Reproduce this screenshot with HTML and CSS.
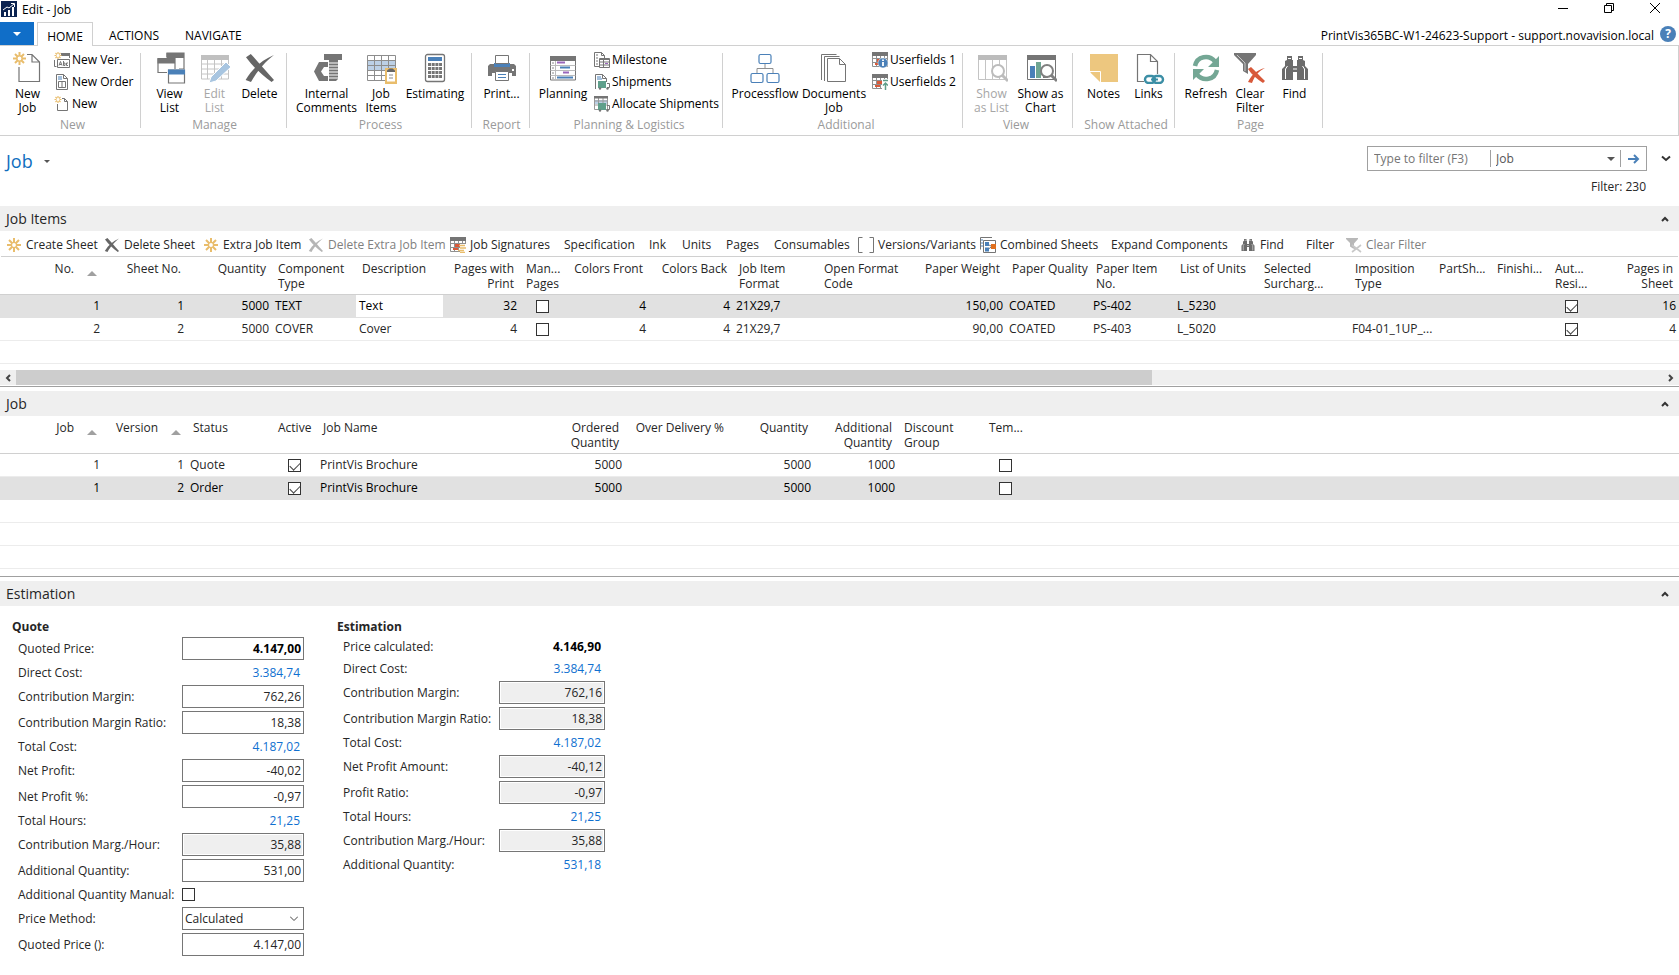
FILE: index.html
```html
<!DOCTYPE html>
<html lang="en">
<head>
  <meta charset="UTF-8" />
  <title>Edit - Job</title>
  <link rel="stylesheet" href="styles.css">
</head>
<body>

<!-- Icon set -->
<svg class="icon-defs" aria-hidden="true">
  <symbol id="i-star" viewBox="0 0 16 16">
    <path d="M8 1v4M8 11v4M1 8h4M11 8h4M3 3l3 3M10 10l3 3M13 3l-3 3M6 10l-3 3" stroke="#e9bd6c" stroke-width="2"/>
    <circle cx="8" cy="8" r="2.6" fill="#fff" stroke="#e9bd6c" stroke-width="1.4"/>
  </symbol>
  <symbol id="i-x" viewBox="0 0 16 16">
    <path d="M1 2.6L3.4 1C7 5 11 9.500 15 14l-1.200 1C9 11.500 4.500 7.500 1 2.600zM15 1.500C10 5.500 7 9 3.500 15L.8 14C4.500 8 9 4 15 1.500z" fill="currentColor"/>
  </symbol>
  <symbol id="i-newjob" viewBox="0 0 32 32">
    <path d="M15 2.500h5l7.500 7.500v19.500h-20.500V15M20 2.500v7.500h7.500" fill="none" stroke="#757575" stroke-width="1.200"/>
    <path d="M7.500 0v4.500M7.500 8.500V13M1 6.500h4.500M9.500 6.500H14M3 2l3 3M9 8l3 3M12 2L9 5M6 8l-3 3" stroke="#e9bd6c" stroke-width="2"/>
    <circle cx="7.500" cy="6.500" r="2.600" fill="#fff" stroke="#e9bd6c" stroke-width="1.400"/>
  </symbol>
  <symbol id="i-new" viewBox="0 0 16 16">
    <path d="M8 2.500h2.500l3 3v9h-10V8M10.500 2.500v3h3" fill="none" stroke="#757575"/>
    <path d="M4 0v2M4 5v2M.5 3.500h2M5.500 3.500h2M1.500 1l1.500 1.500M5 4.500L6.500 6M6.500 1L5 2.500M3 4.500L1.500 6" stroke="#e9bd6c" stroke-width="1.200"/>
  </symbol>
  <symbol id="i-newver" viewBox="0 0 16 16">
    <path d="M7 1h9v3H7z" fill="#757575"/>
    <path d="M.5 8v6.500h2M15.500 4v2" fill="none" stroke="#757575"/>
    <path d="M3.500 7.500h12v8h-12z" fill="#fff" stroke="#757575"/>
    <path d="M5 13.500l1.500-4 1.500 4M5.500 12.500h2M9.500 9v4.500h1.500v-2.500h-1.500M14 11h-1.500v2.500H14" fill="none" stroke="#757575"/>
    <path d="M4 0v2M4 5v2M.5 3.500h2M5.500 3.500h2M1.500 1l1.500 1.500M5 4.500L6.500 6M6.500 1L5 2.500M3 4.500L1.500 6" stroke="#e9bd6c" stroke-width="1.200"/>
  </symbol>
  <symbol id="i-order" viewBox="0 0 16 16">
    <path d="M2.500.5h7l4 4v11h-11zM9.500.5v4h4" fill="#fff" stroke="#757575"/>
    <path d="M4 3h4M4 5h4" stroke="#4a80b8"/>
    <path d="M4.500 7.500h7v6h-7zM8 7.500v6" fill="none" stroke="#757575"/>
  </symbol>
  <symbol id="i-viewlist" viewBox="0 0 32 32">
    <path d="M13 5V1h17v16h-5" fill="none" stroke="#757575" stroke-width="1.200"/><path d="M12.500 1H30v5H12.500z" fill="#757575"/>
    <path d="M4 6.500h17v14H4z" fill="#fff" stroke="#757575" stroke-width="1.200"/><path d="M3.500 6.500H21v5H3.500z" fill="#757575"/>
    <path d="M13 17h19v15H13z" fill="#fff"/><path d="M14.500 18h16v13h-16z" fill="#fff" stroke="#757575" stroke-width="1.200"/><path d="M14 17.500h17v5H14z" fill="#4a80b8"/>
  </symbol>
  <symbol id="i-editlist" viewBox="0 0 32 32">
    <path d="M2.500 4h27v23h-27zM2.500 12h27M2.500 17h27M2.500 22h27M8.500 4v23M15.500 4v23M22.500 4v23" fill="none" stroke="#c4c4c4"/><path d="M2 3h28v5H2z" fill="#c0c0c0"/>
    <path d="M10 31l2-6L27 10l5 5-15 14z" fill="#a8c5e0" stroke="#fff"/>
  </symbol>
  <symbol id="i-chartcal" viewBox="0 0 32 32">
    <path d="M2.500 3.500h28v25h-28z" fill="#fff"/><path d="M3 8.500h27v10H3z" fill="#bcd0e6"/>
    <path d="M2.500 3.500h28v25h-28zM2.500 8.500h28M2.500 13.500h28M2.500 18.500h28M2.500 23.500h28M9.500 3.500v25M16.500 3.500v25M23.500 3.500v25" fill="none" stroke="#8d8d8d"/>
    <path d="M20 16h12v16H20z" fill="#e9bd6c"/><path d="M22 18.500h8v11h-8z" fill="#fff"/><path d="M22 20v-1.500l2.500-2h3l2.500 2V20z" fill="#666"/><path d="M24 23h4M24 26h4" stroke="#888"/>
  </symbol>
  <symbol id="i-bolt" viewBox="0 0 32 32">
    <path d="M13 2h18v6h-4v19l-2 2h-7V8h-5z" fill="#757575"/><path d="M18 11h9M18 14h9M18 17h9M18 20h9M18 23h9M18 26h9" stroke="#fff" stroke-width="1.100"/>
    <path d="M8 10h9v5h-4l-3 4.500 3 4.500h4v5H8l-5-9.500z" fill="#757575"/>
  </symbol>
  <symbol id="i-calc" viewBox="0 0 32 32">
    <rect x="6.500" y="2.500" width="19" height="27" rx="2" fill="#fff" stroke="#757575" stroke-width="1.300"/><path d="M9 5h14v4H9z" fill="#4a80b8"/>
    <path d="M9 12.500h14M9 16.500h14M9 20.500h14M9 24.500h14" stroke="#757575" stroke-width="3" stroke-dasharray="3 .7"/>
  </symbol>
  <symbol id="i-print" viewBox="0 0 32 32">
    <path d="M4 12h24l2 2v10h-4v-3H6v3H2V14z" fill="#757575"/><path d="M8 11h16v4H8z" fill="#4a80b8"/>
    <path d="M9.500 3.500h13v8h-13zM9.500 19.500h13v9h-13z" fill="#fff" stroke="#757575"/><path d="M12 22.500h8M12 25.500h8" stroke="#4a80b8"/><path d="M26 18h2" stroke="#fff" stroke-width="2"/>
  </symbol>
  <symbol id="i-plan" viewBox="0 0 32 32">
    <path d="M3.500 5h25v23h-25z" fill="#fff" stroke="#757575"/><path d="M3 4h26v5H3z" fill="#757575"/>
    <path d="M3.500 13.500h25M3.500 18.500h25M3.500 23.500h25M8.500 9v19" stroke="#bbb"/><path d="M10 10.500h8M16 20.500h6" stroke="#9966bb" stroke-width="2"/><path d="M13 15.500h10M10 25.500h16" stroke="#4a80b8" stroke-width="2"/><path d="M5 11h2M5 16h2M5 21h2M5 26h2" stroke="#888"/>
  </symbol>
  <symbol id="i-milestone" viewBox="0 0 16 16">
    <path d="M.5.5h7l3 3v11H.5zM7.500.5v3h3M2 3h2M2 6h2M2 9h2M2 12h2" fill="#fff" stroke="#757575"/>
    <path d="M5.500 6.500h10v9h-10zM5.500 7.500h10M5.500 10h10M5.500 13h10M9.500 7v8" fill="#fff" stroke="#757575"/><path d="M11 11.500h3" stroke="#9966bb"/>
  </symbol>
  <symbol id="i-ship" viewBox="0 0 16 16">
    <path d="M1.500 15V.5h7l4 4V8M8.500.5v4h4" fill="none" stroke="#757575"/><path d="M3 3h4M3 5h5" stroke="#4a80b8"/>
    <path d="M4 7h8v7H4z" fill="#5f9f8b"/><path d="M13 9.500h2.500v4H13" fill="none" stroke="#757575"/><circle cx="6" cy="14.500" r="1.200" fill="#757575"/><circle cx="13.500" cy="14.500" r="1.200" fill="#757575"/>
  </symbol>
  <symbol id="i-alloc" viewBox="0 0 16 16">
    <path d="M1 4h12v4H1z" fill="#bcd0e6"/><path d="M.5 1.500h13v12H.5zM.5 5h13M.5 9h13M4.500 1v12M9 1v12" fill="none" stroke="#999"/><path d="M0 0h14v2.500H0z" fill="#757575"/>
    <path d="M4 7h8v7H4z" fill="#5f9f8b"/><path d="M13 9.500h2.500v4H13" fill="none" stroke="#757575"/><circle cx="6" cy="14.500" r="1.200" fill="#757575"/><circle cx="13.500" cy="14.500" r="1.200" fill="#757575"/>
  </symbol>
  <symbol id="i-flow" viewBox="0 0 32 32">
    <path d="M16 12v5M8 21v-4.500h16V21" fill="none" stroke="#909090"/><g fill="#fff" stroke="#4a80b8" stroke-width="1.200"><rect x="10" y="2.500" width="12" height="9" rx="1.500"/><rect x="2" y="21.500" width="12" height="9" rx="1.500"/><rect x="18" y="21.500" width="12" height="9" rx="1.500"/></g>
  </symbol>
  <symbol id="i-docs" viewBox="0 0 32 32">
    <g fill="#fff" stroke="#757575"><path d="M3.500 28V2.500h15M6.500 29V4.500h15" fill="none"/><path d="M9.500 6.500h12l6 6v17h-18zM21.500 6.500v6h6"/></g>
  </symbol>
  <symbol id="i-grid" viewBox="0 0 16 16">
    <path d="M.5 1.500h15v13H.5zM.5 6.500h15M.5 10.500h15M4.500 3v12M8.500 3v12M12.500 3v12" fill="none" stroke="#909090"/><path d="M0 0h16v4H0z" fill="#757575"/><path d="M5 7h6v3H5zM3 11h5v2H3z" fill="#d8593a"/>
  </symbol>
  <symbol id="i-user1" viewBox="0 0 16 16">
    <use href="#i-grid"/><circle cx="11" cy="11" r="5" fill="#4a80b8" stroke="#fff" stroke-width=".5"/><path d="M11 7.500v1.500M11 10v4" stroke="#fff" stroke-width="1.800"/>
  </symbol>
  <symbol id="i-user2" viewBox="0 0 16 16">
    <use href="#i-grid"/><path d="M10 5h6v11h-6z" fill="#fff"/><path d="M11 6.500h5M13.500 16V9M11 11.500L13.500 9l2.500 2.500" fill="none" stroke="#5f9f8b" stroke-width="1.500"/>
  </symbol>
  <symbol id="i-sign" viewBox="0 0 16 16">
    <use href="#i-grid"/><path d="M10 7h6v9h-6z" fill="#fff"/><path d="M9 8.500h6M10 11h6M8 13.500h6M10 15.500h5" stroke="#e9bd6c" stroke-width="1.600"/>
  </symbol>
  <symbol id="i-showlist" viewBox="0 0 32 32">
    <path d="M2.500 5h28v22.500h-28zM9.500 8v19M16.500 8v19M23.500 8v19" fill="none" stroke="#c4c4c4"/><path d="M2 3h29v5H2z" fill="#bcbcbc"/>
    <circle cx="22" cy="19" r="6" fill="#fff" stroke="#bcbcbc" stroke-width="2"/><path d="M26 23l6 6" stroke="#bcbcbc" stroke-width="3"/>
  </symbol>
  <symbol id="i-showchart" viewBox="0 0 32 32">
    <path d="M2.500 5h28v22.500h-28z" fill="#fff" stroke="#757575"/><path d="M2 3h29v5H2z" fill="#757575"/><path d="M5 14h5v12H5z" fill="#4a80b8"/><path d="M11 10h5v16h-5z" fill="#6fa592"/><path d="M18 14h5v12h-5z" fill="#757575"/>
    <circle cx="22" cy="19" r="6" fill="#fff" stroke="#808080" stroke-width="2"/><path d="M26 23l6 6" stroke="#808080" stroke-width="3"/>
  </symbol>
  <symbol id="i-note" viewBox="0 0 32 32">
    <path d="M2 2h28v28H13L2 20z" fill="#edc77f"/><path d="M2 19.500h10.500V30" fill="none" stroke="#fff"/><path d="M3 21h9v9z" fill="#edc77f"/>
  </symbol>
  <symbol id="i-links" viewBox="0 0 32 32">
    <path d="M11 29.500H4.500v-27h13l7 7V22M17.500 2.500v7h7" fill="none" stroke="#757575" stroke-width="1.200"/>
    <g fill="none" stroke="#3b8ea5" stroke-width="2.400"><rect x="12" y="24" width="10" height="7" rx="3.500"/><rect x="20" y="24" width="10" height="7" rx="3.500"/></g><path d="M18 27.500h7" stroke="#3b8ea5" stroke-width="2"/>
  </symbol>
  <symbol id="i-refresh" viewBox="0 0 32 32">
    <g fill="none" stroke="#74a795" stroke-width="4.500"><path d="M5 14C7 4 19 2 25 9.500"/><path d="M27 18C25 28 13 30 7 22.500"/></g><path d="M29 4v11H18zM3 28V17h11z" fill="#74a795"/>
  </symbol>
  <symbol id="i-clear" viewBox="0 0 32 32">
    <path d="M0 1h22v2l-8 9v10l-5-3v-7L0 3z" fill="#757575"/><path d="M3 3l8 8v8" fill="none" stroke="#c8c8c8"/>
    <path d="M14 17l3-2c5 5 9 9 14 14l-2 2c-6-4-11-8-15-14zM31 16c-6 3-10 7-13 15l-4-1c4-8 9-12 17-14z" fill="#d8593a"/>
  </symbol>
  <symbol id="i-find" viewBox="0 0 32 32">
    <path d="M8 4h5v4h1v6h4V8h1V4h5v4l2 1v5l3 3v11H18v-8h-4v8H3V17l3-3V9l2-1z" fill="#6b6b6b"/><path d="M6.500 27V17l2-3M25.500 27V17l-2-3M9 6.500h3M20 6.500h3M14 17h4" stroke="#fff" fill="none"/>
  </symbol>
  <symbol id="i-brackets" viewBox="0 0 16 16"><path d="M4.500.5h-4v15h4M11.500.5h4v15h-4" fill="none" stroke="#757575"/></symbol>
  <symbol id="i-combined" viewBox="0 0 16 16">
    <path d="M12 .5H.5v12" fill="none" stroke="#757575"/><path d="M2 2v9" stroke="#4a80b8" stroke-dasharray="2 1"/><path d="M3.500 3.500h12v12h-12z" fill="#fff" stroke="#757575"/>
    <path d="M7 7l5 2.500L7 13" stroke="#757575" fill="none"/><path d="M5 5h4v4H5zM5 10.500h4v4H5z" fill="#4a80b8"/><path d="M11 7h5v5h-5z" fill="#e07020"/>
  </symbol>
  <symbol id="i-clearsmall" viewBox="0 0 16 16">
    <path d="M0 1h12v1L8 6.500v3l3 3-4-1-3-2V6L0 2z" fill="#b8b8b8"/><path d="M6 8l9 7M15 8l-9 7" stroke="#c8c8c8" stroke-width="1.600"/>
  </symbol>
  <symbol id="i-up" viewBox="0 0 8 6"><path d="M1 5l3-3 3 3" fill="none" stroke="#333" stroke-width="2"/></symbol>
  <symbol id="i-down" viewBox="0 0 10 7"><path d="M1 1.500l4 3.500 4-3.500" fill="none" stroke="#333" stroke-width="2"/></symbol>
</svg>

<header class="titlebar">
  <svg class="app-icon" viewBox="0 0 16 16"><path d="M0 0h16v16H0z" fill="#0b2350"/><path d="M3 15v-4h2v4zM7 15V9h2v6zM11 15V6h2v9z" fill="#fff"/><path d="M2 9l4-3 2 1 5-4M10 2.500h3.500V6" fill="none" stroke="#fff"/></svg>
  <span class="title">Edit - Job</span>
  <button class="win-btn" aria-label="Minimize"><svg viewBox="0 0 10 10"><path d="M0 5.500h10" stroke="#000"/></svg></button>
  <button class="win-btn" aria-label="Restore"><svg viewBox="0 0 10 10"><path d="M.5 2.500h7v7h-7zM2.500 2.500v-2h7v7h-2" fill="none" stroke="#000"/></svg></button>
  <button class="win-btn" aria-label="Close"><svg viewBox="0 0 10 10"><path d="M0 0l10 10M10 0L0 10" stroke="#000"/></svg></button>
</header>

<nav class="tabs">
  <button class="file-btn" aria-label="File menu"><svg viewBox="0 0 8 4"><path d="M0 0h8L4 4z" fill="#fff"/></svg></button>
  <button class="tab-btn active">HOME</button>
  <button class="tab-btn">ACTIONS</button>
  <button class="tab-btn">NAVIGATE</button>
  <span class="server">PrintVis365BC-W1-24623-Support - support.novavision.local</span>
  <button class="help-btn" aria-label="Help">?</button>
</nav>

<div class="ribbon">
  <section class="group group-new">
    <button class="big"><svg><use href="#i-newjob"/></svg>New<br>Job</button>
    <div class="smalls">
      <button class="small"><svg><use href="#i-newver"/></svg>New Ver.</button>
      <button class="small"><svg><use href="#i-order"/></svg>New Order</button>
      <button class="small"><svg><use href="#i-new"/></svg>New</button>
    </div>
    <h2>New</h2>
  </section>
  <span class="sep"></span>
  <section class="group group-manage">
    <button class="big"><svg><use href="#i-viewlist"/></svg>View<br>List</button>
    <button class="big" disabled><svg><use href="#i-editlist"/></svg>Edit<br>List</button>
    <button class="big"><svg class="gray"><use href="#i-x"/></svg>Delete</button>
    <h2>Manage</h2>
  </section>
  <span class="sep"></span>
  <section class="group group-process">
    <button class="big"><svg><use href="#i-bolt"/></svg>Internal<br>Comments</button>
    <button class="big"><svg><use href="#i-chartcal"/></svg>Job<br>Items</button>
    <button class="big"><svg><use href="#i-calc"/></svg>Estimating</button>
    <h2>Process</h2>
  </section>
  <span class="sep"></span>
  <section class="group group-report">
    <button class="big"><svg><use href="#i-print"/></svg>Print...</button>
    <h2>Report</h2>
  </section>
  <span class="sep"></span>
  <section class="group group-planning">
    <button class="big"><svg><use href="#i-plan"/></svg>Planning</button>
    <div class="smalls">
      <button class="small"><svg><use href="#i-milestone"/></svg>Milestone</button>
      <button class="small"><svg><use href="#i-ship"/></svg>Shipments</button>
      <button class="small"><svg><use href="#i-alloc"/></svg>Allocate Shipments</button>
    </div>
    <h2>Planning &amp; Logistics</h2>
  </section>
  <span class="sep"></span>
  <section class="group group-additional">
    <button class="big"><svg><use href="#i-flow"/></svg>Processflow</button>
    <button class="big"><svg><use href="#i-docs"/></svg>Documents<br>Job</button>
    <div class="smalls">
      <button class="small"><svg><use href="#i-user1"/></svg>Userfields 1</button>
      <button class="small"><svg><use href="#i-user2"/></svg>Userfields 2</button>
    </div>
    <h2>Additional</h2>
  </section>
  <span class="sep"></span>
  <section class="group group-view">
    <button class="big" disabled><svg><use href="#i-showlist"/></svg>Show<br>as List</button>
    <button class="big"><svg><use href="#i-showchart"/></svg>Show as<br>Chart</button>
    <h2>View</h2>
  </section>
  <span class="sep"></span>
  <section class="group group-attached">
    <button class="big"><svg><use href="#i-note"/></svg>Notes</button>
    <button class="big"><svg><use href="#i-links"/></svg>Links</button>
    <h2>Show Attached</h2>
  </section>
  <span class="sep"></span>
  <section class="group group-page">
    <button class="big"><svg><use href="#i-refresh"/></svg>Refresh</button>
    <button class="big"><svg><use href="#i-clear"/></svg>Clear<br>Filter</button>
    <button class="big"><svg><use href="#i-find"/></svg>Find</button>
    <h2>Page</h2>
  </section>
  <span class="sep"></span>
</div>

<div class="page-head">
  <button class="page-title">Job <svg viewBox="0 0 6 3"><path d="M0 0h6L3 3z" fill="#555"/></svg></button>
  <div class="filter">
    <div class="filter-row">
      <div class="filter-box">
        <input type="text" class="filter-input" placeholder="Type to filter (F3)" aria-label="Type to filter">
        <span class="select-wrap filter-field">
          <select aria-label="Filter field"><option>Job</option></select>
          <svg viewBox="0 0 8 4"><path d="M0 0h8L4 4z" fill="#555"/></svg>
        </span>
        <button class="go-btn" aria-label="Apply filter"><svg viewBox="0 0 12 10"><path d="M0 5h10M6 1l4 4-4 4" fill="none" stroke="#4a80b8" stroke-width="2"/></svg></button>
      </div>
      <button class="expand-btn" aria-label="Expand filter"><svg><use href="#i-down"/></svg></button>
    </div>
    <div class="filter-info">Filter: 230</div>
  </div>
</div>

<!-- Job Items -->
<section class="part">
  <div class="part-head"><h1>Job Items</h1><button aria-label="Collapse"><svg><use href="#i-up"/></svg></button></div>
  <div class="toolbar">
    <button><svg><use href="#i-star"/></svg>Create Sheet</button>
    <button><svg class="gray"><use href="#i-x"/></svg>Delete Sheet</button>
    <button><svg><use href="#i-star"/></svg>Extra Job Item</button>
    <button disabled><svg class="light"><use href="#i-x"/></svg>Delete Extra Job Item</button>
    <button><svg><use href="#i-sign"/></svg>Job Signatures</button>
    <button>Specification</button>
    <button>Ink</button>
    <button>Units</button>
    <button>Pages</button>
    <button>Consumables</button>
    <button><svg><use href="#i-brackets"/></svg>Versions/Variants</button>
    <button><svg><use href="#i-combined"/></svg>Combined Sheets</button>
    <button>Expand Components</button>
    <button><svg><use href="#i-find"/></svg>Find</button>
    <button>Filter</button>
    <button disabled><svg><use href="#i-clearsmall"/></svg>Clear Filter</button>
  </div>
  <table class="grid items-grid">
    <colgroup>
      <col class="c103"><col class="c84"><col class="c85"><col class="c84"><col class="c87"><col class="c77"><col class="c45"><col class="c84"><col class="c84"><col class="c85"><col class="c84"><col class="c104"><col class="c84"><col class="c84"><col class="c84"><col class="c91"><col class="c84"><col class="c58"><col class="c58"><col class="c45"><col>
    </colgroup>
    <thead>
      <tr>
        <th class="num"><span class="sorted">No.</span></th><th class="num">Sheet No.</th><th class="num">Quantity</th><th>Component<br>Type</th><th>Description</th><th class="num">Pages with<br>Print</th><th>Man...<br>Pages</th><th class="num">Colors Front</th><th class="num">Colors Back</th><th>Job Item<br>Format</th><th>Open Format<br>Code</th><th class="num">Paper Weight</th><th>Paper Quality</th><th>Paper Item<br>No.</th><th>List of Units</th><th>Selected<br>Surcharg...</th><th>Imposition<br>Type</th><th>PartSh...</th><th>Finishi...</th><th>Aut...<br>Resi...</th><th class="num">Pages in<br>Sheet</th>
      </tr>
    </thead>
    <tbody>
      <tr class="selected">
        <td class="num">1</td><td class="num">1</td><td class="num">5000</td><td>TEXT</td><td class="editing">Text</td><td class="num">32</td><td class="check"><input type="checkbox" aria-label="Manual pages"></td><td class="num">4</td><td class="num">4</td><td>21X29,7</td><td></td><td class="num">150,00</td><td>COATED</td><td>PS-402</td><td>L_5230</td><td></td><td></td><td></td><td></td><td class="check"><input type="checkbox" aria-label="Auto resize" checked></td><td class="num">16</td>
      </tr>
      <tr>
        <td class="num">2</td><td class="num">2</td><td class="num">5000</td><td>COVER</td><td>Cover</td><td class="num">4</td><td class="check"><input type="checkbox" aria-label="Manual pages"></td><td class="num">4</td><td class="num">4</td><td>21X29,7</td><td></td><td class="num">90,00</td><td>COATED</td><td>PS-403</td><td>L_5020</td><td></td><td>F04-01_1UP_...</td><td></td><td></td><td class="check"><input type="checkbox" aria-label="Auto resize" checked></td><td class="num">4</td>
      </tr>
      <tr><td colspan="21"></td></tr>
    </tbody>
  </table>
  <div class="scrollbar">
    <button aria-label="Scroll left"><svg viewBox="0 0 6 8"><path d="M5 1L2 4l3 3" fill="none" stroke="#444" stroke-width="2"/></svg></button>
    <div class="track"><div class="thumb"></div></div>
    <button aria-label="Scroll right"><svg viewBox="0 0 6 8"><path d="M1 1l3 3-3 3" fill="none" stroke="#444" stroke-width="2"/></svg></button>
  </div>
</section>

<!-- Job versions -->
<section class="part">
  <div class="part-head"><h1>Job</h1><button aria-label="Collapse"><svg><use href="#i-up"/></svg></button></div>
  <table class="grid job-grid">
    <colgroup>
      <col class="c103"><col class="c84"><col class="c85"><col class="c45"><col class="c203"><col class="c105"><col class="c105"><col class="c84"><col class="c84"><col class="c85"><col class="c45"><col>
    </colgroup>
    <thead>
      <tr>
        <th class="num"><span class="sorted">Job</span></th><th class="num"><span class="sorted">Version</span></th><th>Status</th><th>Active</th><th>Job Name</th><th class="num">Ordered<br>Quantity</th><th class="num">Over Delivery %</th><th class="num">Quantity</th><th class="num">Additional<br>Quantity</th><th>Discount<br>Group</th><th>Tem...</th><th></th>
      </tr>
    </thead>
    <tbody>
      <tr>
        <td class="num">1</td><td class="num">1</td><td>Quote</td><td class="check"><input type="checkbox" aria-label="Active" checked></td><td>PrintVis Brochure</td><td class="num">5000</td><td></td><td class="num">5000</td><td class="num">1000</td><td></td><td class="check"><input type="checkbox" aria-label="Template"></td><td></td>
      </tr>
      <tr class="selected">
        <td class="num">1</td><td class="num">2</td><td>Order</td><td class="check"><input type="checkbox" aria-label="Active" checked></td><td>PrintVis Brochure</td><td class="num">5000</td><td></td><td class="num">5000</td><td class="num">1000</td><td></td><td class="check"><input type="checkbox" aria-label="Template"></td><td></td>
      </tr>
      <tr><td colspan="12"></td></tr>
      <tr><td colspan="12"></td></tr>
      <tr><td colspan="12"></td></tr>
    </tbody>
  </table>
</section>

<!-- Estimation -->
<section class="part estimation">
  <div class="part-head"><h1>Estimation</h1><button aria-label="Collapse"><svg><use href="#i-up"/></svg></button></div>
  <div class="columns">
    <form class="fields quote">
      <h2>Quote</h2>
      <div class="field"><label for="q-price">Quoted Price:</label><input type="text" id="q-price" class="strong" value="4.147,00"></div>
      <div class="field"><span>Direct Cost:</span><a href="#">3.384,74</a></div>
      <div class="field"><label for="q-margin">Contribution Margin:</label><input type="text" id="q-margin" value="762,26"></div>
      <div class="field"><label for="q-ratio">Contribution Margin Ratio:</label><input type="text" id="q-ratio" value="18,38"></div>
      <div class="field"><span>Total Cost:</span><a href="#">4.187,02</a></div>
      <div class="field"><label for="q-profit">Net Profit:</label><input type="text" id="q-profit" value="-40,02"></div>
      <div class="field"><label for="q-pct">Net Profit %:</label><input type="text" id="q-pct" value="-0,97"></div>
      <div class="field"><span>Total Hours:</span><a href="#">21,25</a></div>
      <div class="field"><label for="q-hour">Contribution Marg./Hour:</label><input type="text" id="q-hour" value="35,88" readonly></div>
      <div class="field"><label for="q-addqty">Additional Quantity:</label><input type="text" id="q-addqty" value="531,00"></div>
      <div class="field"><label for="q-manual">Additional Quantity Manual:</label><input type="checkbox" id="q-manual"></div>
      <div class="field">
        <label for="q-method">Price Method:</label>
        <span class="select-wrap boxed">
          <select id="q-method"><option>Calculated</option></select>
          <svg viewBox="0 0 8 5"><path d="M0 .5l4 4 4-4" fill="none" stroke="#444"/></svg>
        </span>
      </div>
      <div class="field"><label for="q-price2">Quoted Price ():</label><input type="text" id="q-price2" value="4.147,00"></div>
    </form>
    <form class="fields calc">
      <h2>Estimation</h2>
      <div class="field"><span>Price calculated:</span><output class="strong">4.146,90</output></div>
      <div class="field"><span>Direct Cost:</span><a href="#">3.384,74</a></div>
      <div class="field"><label for="e-margin">Contribution Margin:</label><input type="text" id="e-margin" value="762,16" readonly></div>
      <div class="field"><label for="e-ratio">Contribution Margin Ratio:</label><input type="text" id="e-ratio" value="18,38" readonly></div>
      <div class="field"><span>Total Cost:</span><a href="#">4.187,02</a></div>
      <div class="field"><label for="e-profit">Net Profit Amount:</label><input type="text" id="e-profit" value="-40,12" readonly></div>
      <div class="field"><label for="e-pct">Profit Ratio:</label><input type="text" id="e-pct" value="-0,97" readonly></div>
      <div class="field"><span>Total Hours:</span><a href="#">21,25</a></div>
      <div class="field"><label for="e-hour">Contribution Marg./Hour:</label><input type="text" id="e-hour" value="35,88" readonly></div>
      <div class="field"><span>Additional Quantity:</span><a href="#">531,18</a></div>
    </form>
  </div>
</section>

</body>
</html>
```
FILE: styles.css
```css
:root {
  --text: #262626;
  --muted: #9a9a9a;
  --line: #d0d0d0;
  --blue: #106ebe;
  --band: #efefef;
}

* {
  box-sizing: border-box;
}

body {
  margin: 0;
  background: #fff;
  color: var(--text);
  font-family: "Segoe UI", "Open Sans", sans-serif;
  font-size: 12px;
  line-height: 15px;
}

button,
input,
select {
  font: inherit;
  color: inherit;
  margin: 0;
  padding: 0;
  border: none;
  background: none;
  border-radius: 0;
}

button {
  white-space: nowrap;
}

h1,
h2 {
  margin: 0;
  font-size: 12px;
  font-weight: normal;
}

svg {
  display: block;
  flex: none;
}

.icon-defs {
  display: none;
}

.gray {
  color: #666;
}

.light {
  color: #b5b5b5;
}

/* Title bar */
.titlebar {
  display: flex;
  align-items: flex-start;
  height: 22px;
  padding: 1px 1px 0 1px;
}

.app-icon {
  width: 16px;
  height: 16px;
}

.title {
  flex: 1;
  padding: 1px 5px;
  color: #000;
}

.win-btn {
  display: grid;
  place-items: center;
  width: 46px;
  height: 14px;
}

.win-btn svg {
  width: 10px;
  height: 10px;
}

/* Tabs */
.tabs {
  display: flex;
  height: 23px;
  color: #000;
}

.file-btn {
  display: grid;
  place-items: center;
  width: 34px;
  margin-right: 3px;
  background: #106ec8;
}

.file-btn svg {
  width: 8px;
  height: 4px;
}

.tab-btn {
  padding: 4px 15px 0 11px;
}

.tab-btn.active {
  z-index: 1;
  width: 56px;
  height: 24px;
  margin-right: 5px;
  padding: 3px 0 0;
  border: 1px solid var(--line);
  border-bottom: none;
  background: #fff;
}

.server {
  margin-left: auto;
  padding: 6px 6px 0 0;
}

.help-btn {
  width: 16px;
  height: 16px;
  margin: 4px 3px 0 0;
  border-radius: 50%;
  background: #4a80b8;
  color: #fff;
  font-weight: bold;
  line-height: 16px;
}

/* Ribbon */
.ribbon {
  display: flex;
  height: 91px;
  border: 1px solid var(--line);
  border-left: none;
}

.sep {
  width: 1px;
  margin: 7px 0;
  background: var(--line);
}

.group {
  display: grid;
  grid-template-rows: 71px 16px;
  flex: none;
}

.group h2 {
  grid-column: 1 / -1;
  text-align: center;
  line-height: 16px;
  color: var(--muted);
}

.group-new { width: 140px; padding-left: 5px; grid-template-columns: 45px 1fr; }
.group-manage { width: 145px; padding-left: 6px; grid-template-columns: 45px 45px 45px; }
.group-process { width: 184px; padding-left: 6px; grid-template-columns: 67px 42px 66px; }
.group-report { width: 57px; padding-left: 7px; grid-template-columns: 45px; }
.group-planning { width: 192px; padding-left: 6px; grid-template-columns: 54px 1fr; }
.group-additional { width: 239px; padding-left: 7px; grid-template-columns: 70px 68px 1fr; }
.group-view { width: 109px; padding-left: 4px; grid-template-columns: 49px 49px; }
.group-attached { width: 101px; padding-left: 8px; grid-template-columns: 45px 45px; }
.group-page { width: 147px; padding-left: 8px; grid-template-columns: 46px 42px 47px; }

.group-attached h2 {
  white-space: nowrap;
}

.big {
  display: block;
  align-self: start;
  padding-top: 6px;
  line-height: 14px;
  color: #000;
}

.big svg {
  width: 32px;
  height: 32px;
  margin: 0 auto 3px;
}

.big:disabled {
  color: #a6a6a6;
}

.smalls {
  padding: 3px 0 0 4px;
}

.small {
  display: flex;
  align-items: center;
  gap: 2px;
  height: 22px;
  padding-bottom: 1px;
  color: #000;
}

.small svg {
  width: 16px;
  height: 16px;
}

/* Page heading and filter */
.page-head {
  display: flex;
  justify-content: space-between;
  align-items: flex-start;
  height: 70px;
  padding: 10px 8px 0 6px;
}

.page-title {
  display: flex;
  align-items: center;
  gap: 11px;
  font-size: 18px;
  line-height: 30px;
  color: var(--blue);
}

.page-title svg {
  width: 6px;
  height: 3px;
}

.filter-row {
  display: flex;
  align-items: center;
  gap: 14px;
}

.filter-box {
  display: flex;
  width: 280px;
  height: 25px;
  padding: 3px 0;
  border: 1px solid #a0a0a0;
  color: #555;
}

.filter-input {
  width: 123px;
  padding-left: 6px;
  border-right: 1px solid #a0a0a0;
}

.filter-input::placeholder {
  color: #757575;
}

.select-wrap {
  display: grid;
  align-items: center;
}

.select-wrap select,
.select-wrap svg {
  grid-area: 1 / 1;
}

.select-wrap select {
  appearance: none;
  width: 100%;
}

.select-wrap svg {
  justify-self: end;
  width: 8px;
  margin-right: 5px;
  pointer-events: none;
}

.filter-field {
  flex: 1;
  padding-left: 5px;
  border-right: 1px solid #a0a0a0;
}

.go-btn {
  display: grid;
  place-items: center;
  width: 25px;
}

.go-btn svg {
  width: 12px;
  height: 10px;
}

.expand-btn svg {
  width: 10px;
  height: 7px;
}

.filter-info {
  padding: 8px 25px 0 0;
  text-align: right;
}

/* Parts */
.part {
  border-bottom: 1px solid #a0a0a0;
  margin-bottom: 4px;
}

.part-head {
  display: flex;
  justify-content: space-between;
  align-items: center;
  height: 25px;
  padding: 0 10px 0 6px;
  background: var(--band);
}

.part-head h1 {
  font-size: 14px;
}

.part-head svg {
  width: 8px;
  height: 6px;
}

.toolbar {
  display: grid;
  grid-template-columns: 98px 99px 105px 142px 114px 85px 33px 44px 48px 84px 122px 131px 129px 66px 40px 1fr;
  height: 26px;
  margin: 0 1px;
  padding-left: 5px;
  border-bottom: 1px solid var(--line);
}

.toolbar button {
  display: flex;
  align-items: center;
  gap: 4px;
  padding-top: 2px;
}

.toolbar button:disabled {
  color: #808080;
}

.toolbar svg {
  width: 16px;
  height: 16px;
}

.grid {
  width: 100%;
  table-layout: fixed;
  border-spacing: 0;
}

.grid th {
  height: 38px;
  padding: 4px 6px 0;
  border-bottom: 1px solid var(--line);
  font-weight: normal;
  text-align: left;
  vertical-align: top;
  white-space: nowrap;
}

.grid td {
  height: 23px;
  padding: 0 3px 1px;
  border-bottom: 1px solid #ececec;
  line-height: 14px;
  white-space: nowrap;
}

.grid .num {
  text-align: right;
}

.grid .check {
  text-align: center;
}

.grid .selected td {
  background: #e1e1e1;
  border-color: #e1e1e1;
  color: #000;
}

.grid .selected .editing {
  background: #fff;
}

.sorted {
  display: flex;
  justify-content: flex-end;
  align-items: flex-end;
  gap: 13px;
}

.sorted::after {
  content: "";
  border: 5px solid transparent;
  border-top: none;
  border-bottom-color: #a0a0a0;
}

.c45 { width: 45px; }
.c58 { width: 58px; }
.c77 { width: 77px; }
.c84 { width: 84px; }
.c85 { width: 85px; }
.c87 { width: 87px; }
.c91 { width: 91px; }
.c103 { width: 103px; }
.c104 { width: 104px; }
.c105 { width: 105px; }
.c203 { width: 203px; }

.job-grid {
  padding-bottom: 7px;
}

input[type="checkbox"] {
  appearance: none;
  display: inline-block;
  width: 13px;
  height: 13px;
  border: 1px solid #333;
  background: #fff;
  vertical-align: middle;
}

input[type="checkbox"]:checked::after {
  content: "";
  display: block;
  width: 9px;
  height: 5px;
  margin: 2px 1px;
  border: solid #444;
  border-width: 0 0 1px 1px;
  transform: rotate(-45deg);
}

.scrollbar {
  display: flex;
  height: 16px;
  margin-top: 5px;
  border-bottom: 1px solid #fff;
  background: var(--band);
}

.scrollbar button {
  display: grid;
  place-items: center;
  width: 16px;
}

.scrollbar svg {
  width: 6px;
  height: 8px;
}

.track {
  flex: 1;
}

.thumb {
  width: 69%;
  height: 100%;
  background: #cdcdcd;
}

.items-grid {
  margin-bottom: 6px;
}

/* Estimation */
.estimation {
  margin: 0;
  border: none;
}

.columns {
  display: flex;
  gap: 33px;
  padding: 13px 12px;
}

.fields {
  display: grid;
  gap: 3px;
  align-content: start;
}

.quote {
  width: 292px;
}

.calc {
  width: 268px;
}

.fields h2 {
  font-weight: bold;
  line-height: 15px;
}

.field {
  display: grid;
  grid-template-columns: 164px 1fr;
  align-items: center;
  min-height: 19px;
  padding-left: 6px;
  white-space: nowrap;
}

.calc .field {
  grid-template-columns: 156px 1fr;
}

.field input[type="text"],
.boxed {
  width: 100%;
  height: 23px;
  border: 1px solid #767676;
  background: #fff;
}

.field input[type="text"] {
  padding: 0 2px 1px;
  text-align: right;
}

.field input[readonly] {
  background: var(--band);
  box-shadow: inset 0 0 0 1px #fff;
}

.field a,
.field output {
  padding-right: 4px;
  text-align: right;
  color: #1070d0;
  text-decoration: none;
}

.field .strong {
  font-weight: bold;
  color: #000;
}

.boxed select {
  padding-left: 2px;
}
```
